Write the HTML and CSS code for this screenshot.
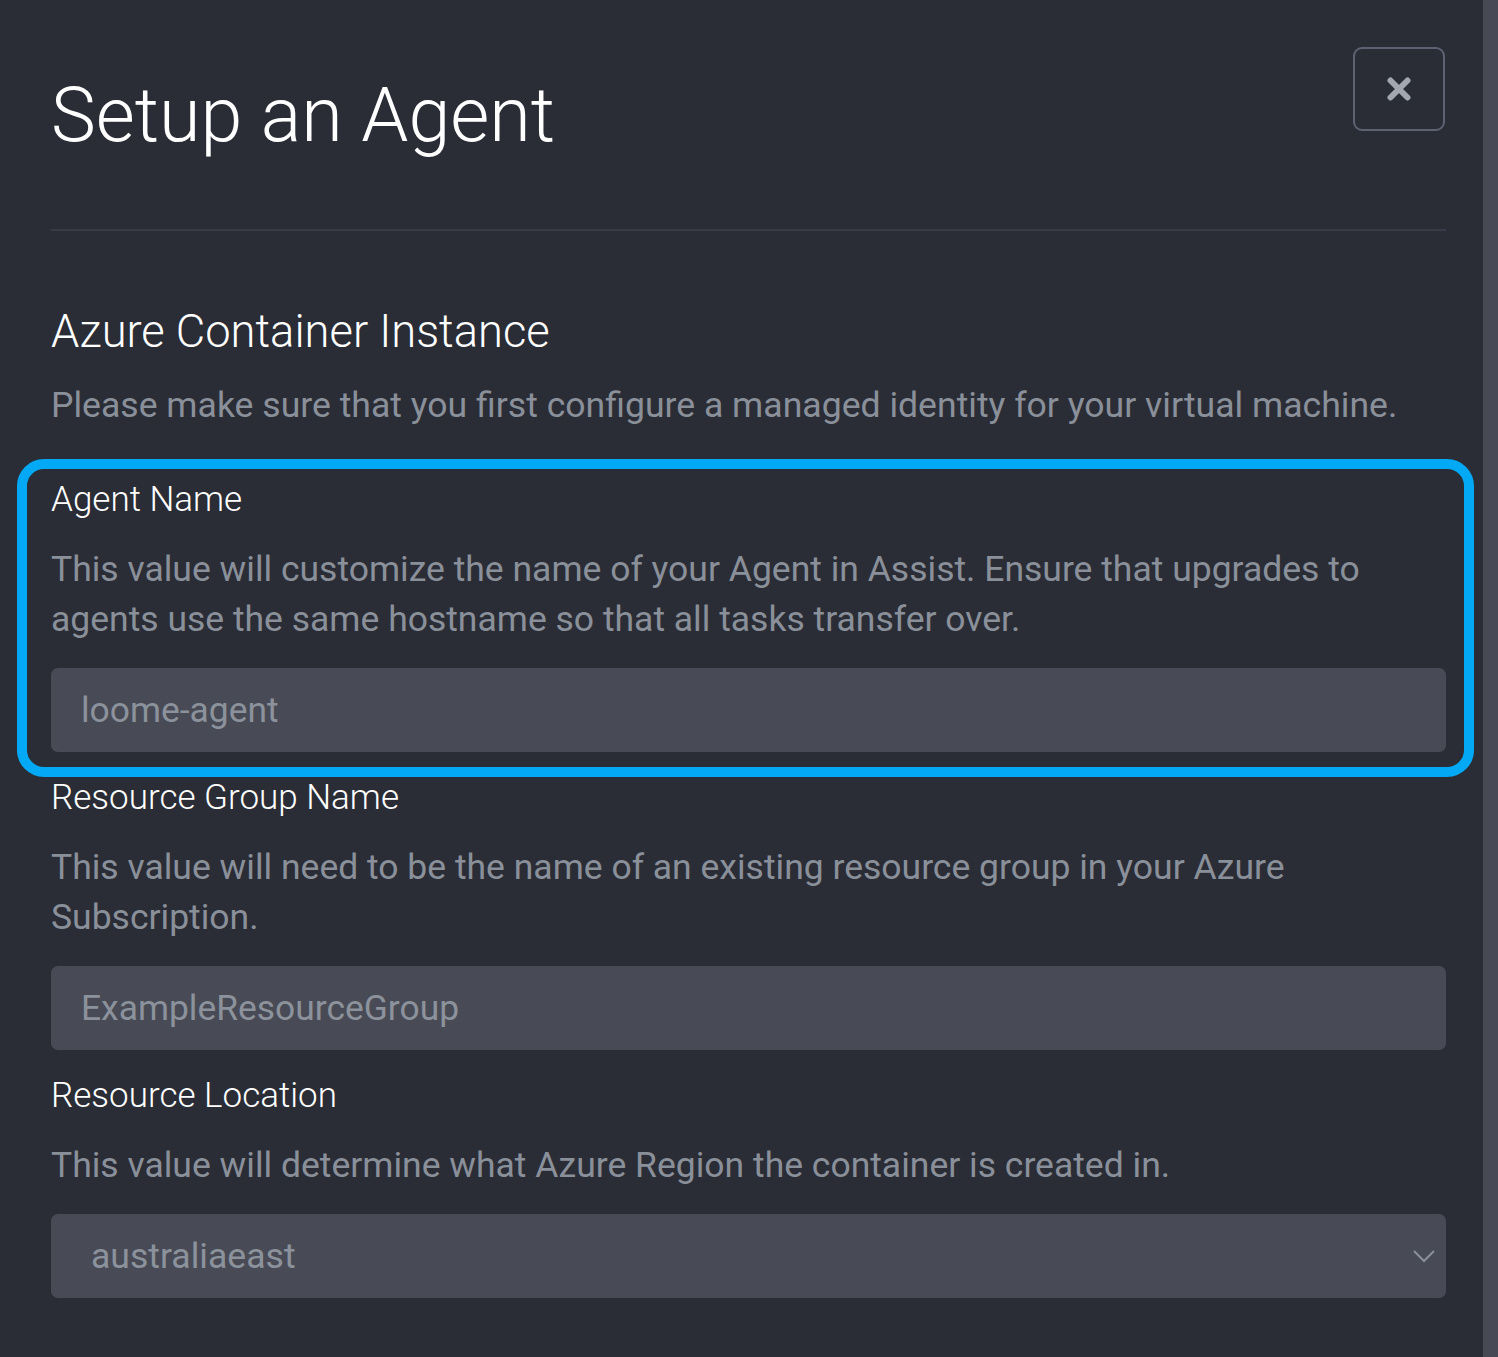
FILE: index.html
```html
<!DOCTYPE html>
<html lang="en">
<head>
<meta charset="utf-8">
<title>Setup an Agent</title>
<link rel="stylesheet" href="styles.css">
</head>
<body>
<div class="modal">
  <div class="modal-header">
    <h1 class="modal-title">Setup an Agent</h1>
    <button class="close-btn" type="button" aria-label="Close">
      <svg width="24" height="24" viewBox="0 0 24 24" aria-hidden="true">
        <path d="M3.5 3.5 L20.5 20.5 M20.5 3.5 L3.5 20.5" stroke="#a3a8b0" stroke-width="6" stroke-linecap="round" fill="none"/>
      </svg>
    </button>
  </div>
  <div class="modal-body">
    <h2 class="section-title">Azure Container Instance</h2>
    <p class="intro">Please make sure that you first configure a managed identity for your virtual machine.</p>

    <div class="fields">
      <div class="field highlighted">
        <label class="field-label" for="agent">Agent Name</label>
        <p class="field-help">This value will customize the name of your Agent in Assist. Ensure that upgrades to agents use the same hostname so that all tasks transfer over.</p>
        <input id="agent" class="field-input" type="text" placeholder="loome-agent">
      </div>

      <div class="field">
        <label class="field-label" for="rg">Resource Group Name</label>
        <p class="field-help">This value will need to be the name of an existing resource group in your Azure Subscription.</p>
        <input id="rg" class="field-input" type="text" placeholder="ExampleResourceGroup">
      </div>

      <div class="field">
        <label class="field-label" for="loc">Resource Location</label>
        <p class="field-help">This value will determine what Azure Region the container is created in.</p>
        <div class="select">
          <span class="select-value">australiaeast</span>
          <svg class="chevron" width="24" height="14" viewBox="0 0 24 14" aria-hidden="true">
            <path d="M2 2 L12 12 L22 2" stroke="#8a909a" stroke-width="2" fill="none"/>
          </svg>
        </div>
      </div>
    </div>
  </div>
</div>
<div class="scrollbar"></div>
</body>
</html>
```

FILE: styles.css
```css
* {
  box-sizing: border-box;
}

html, body {
  margin: 0;
  padding: 0;
}

body {
  background: #2a2d36;
  font-family: Roboto, "Liberation Sans", sans-serif;
  color: #ffffff;
  display: flex;
  min-height: 100vh;
  overflow: hidden;
}

.modal {
  flex: 1;
  padding: 0 37px 0 51px;
}

.scrollbar {
  width: 15px;
  background: #474a54;
  flex: none;
}

.modal-header {
  box-sizing: content-box;
  display: flex;
  justify-content: space-between;
  align-items: flex-start;
  padding-top: 47px;
  height: 182px;
  border-bottom: 2px solid #393c48;
}

.modal-title {
  margin: 23px 0 0 0;
  font-size: 75.5px;
  font-weight: 300;
  line-height: 1.2;
  color: #ffffff;
}

.close-btn {
  width: 92px;
  height: 84px;
  margin-right: 1px;
  border: 2px solid #5d6172;
  border-radius: 9px;
  background: transparent;
  display: flex;
  align-items: center;
  justify-content: center;
  padding: 0;
  cursor: pointer;
}

.modal-body {
  padding-top: 74px;
}

.section-title {
  margin: 0;
  font-size: 45.3px;
  font-weight: 300;
  line-height: 54px;
  color: #ffffff;
}

.intro {
  margin: 21px 0 0 0;
  font-size: 35.6px;
  line-height: 50px;
  color: #8a909a;
}

.fields {
  margin-top: 50px;
  display: flex;
  flex-direction: column;
  gap: 26px;
}

.field {
  position: relative;
}

.highlighted::after {
  content: "";
  position: absolute;
  top: -21px;
  bottom: -25px;
  left: -34px;
  right: -28px;
  border: 10px solid #03a9f4;
  border-radius: 27px;
  pointer-events: none;
}

.field-label {
  display: block;
  font-size: 35px;
  font-weight: 300;
  line-height: 40px;
  color: #ffffff;
  margin-bottom: 24px;
}

.field-help {
  margin: 0 0 24px 0;
  font-size: 35.5px;
  line-height: 50px;
  color: #8a909a;
}

.field-input {
  display: block;
  width: 100%;
  height: 84px;
  border: none;
  border-radius: 7px;
  background: #484b55;
  padding: 0 30px;
  font-family: Roboto, "Liberation Sans", sans-serif;
  font-size: 35.4px;
  color: #ffffff;
  outline: none;
}

.field-input::placeholder {
  color: #8c929c;
  opacity: 1;
}

.select {
  display: flex;
  align-items: center;
  justify-content: space-between;
  height: 84px;
  border-radius: 7px;
  background: #484b55;
  padding: 0 10px 0 40px;
}

.select-value {
  font-size: 35.6px;
  color: #8c929c;
}

.chevron {
  display: block;
}
```
